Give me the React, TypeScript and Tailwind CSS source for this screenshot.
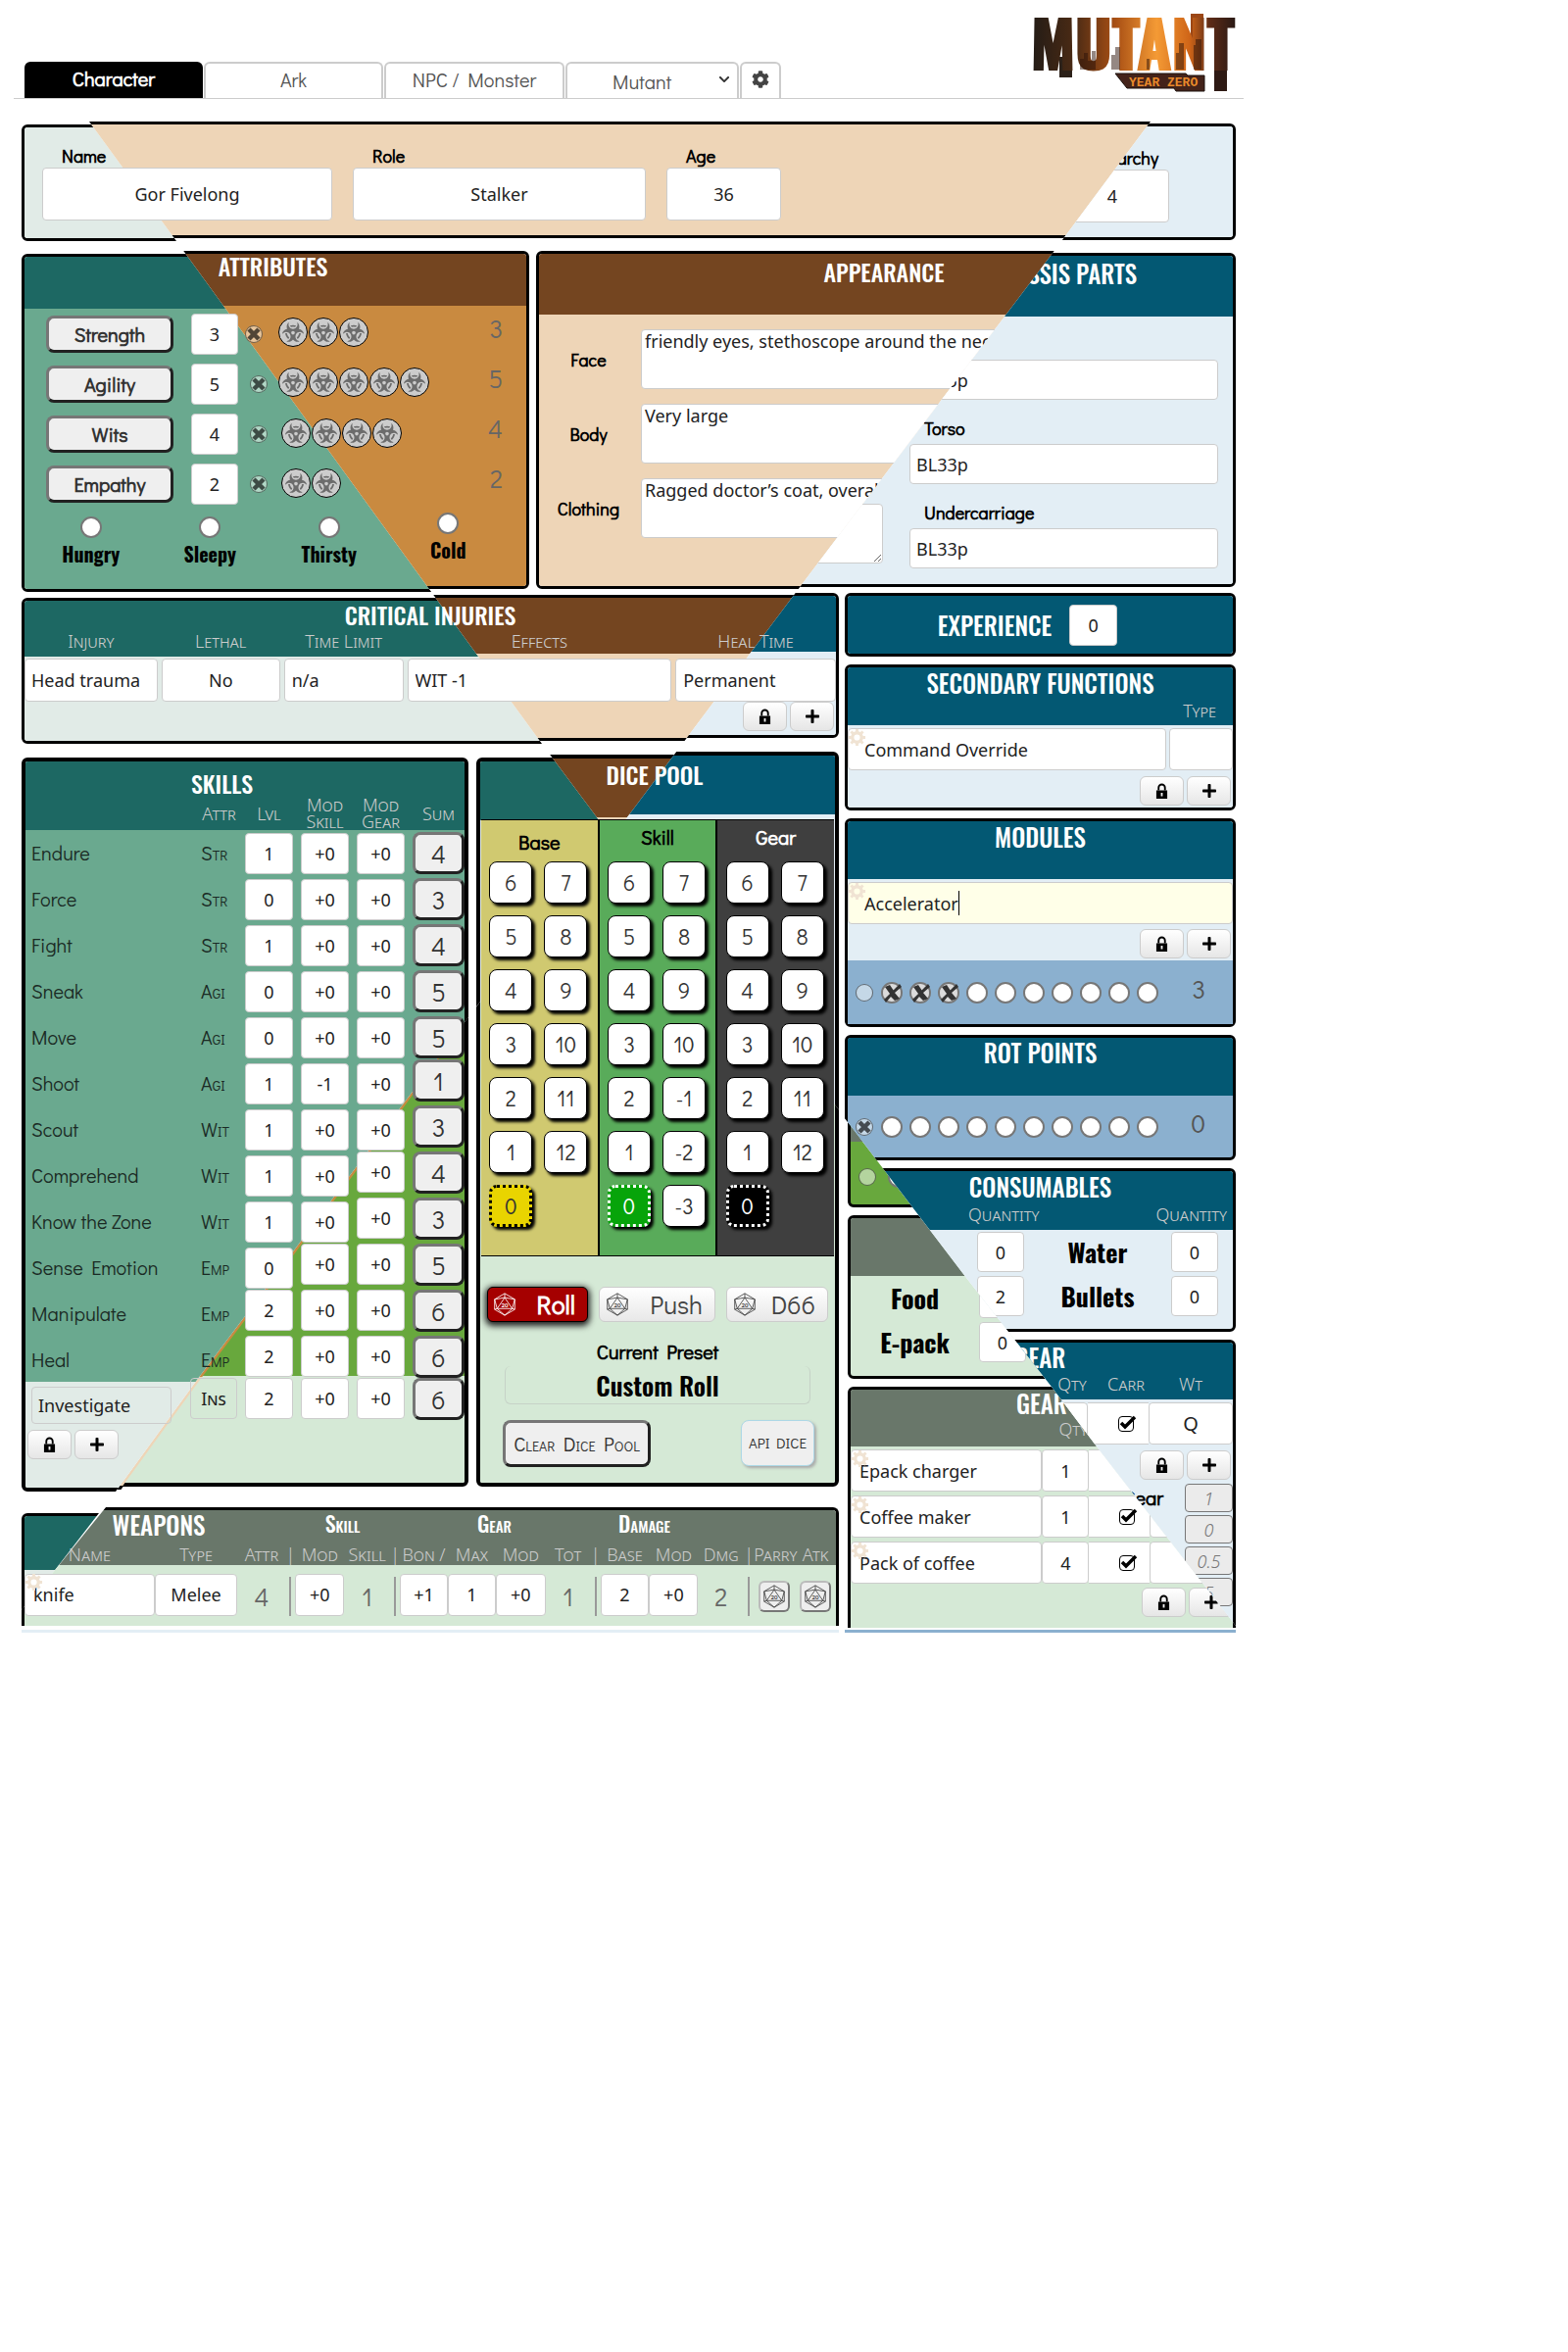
import React from "react";
import { FaBiohazard, FaCog, FaLock, FaPlus, FaTimes, FaChevronDown } from "react-icons/fa";

type Pt = [number, number];
type Region = "teal" | "brown" | "blue" | "green" | "seam";

/* Regions of the collage, in sheet coordinates. */
const tealEdge: Pt[] = [[2, 0], [91, 124], [188, 257], [443, 608], [553, 759], [612, 838], [609, 865]];
const lowerLeft: Pt[] = [[609, 865], [493, 1018], [408, 1131], [247, 1347], [201, 1408], [118, 1522], [53, 1606], [20, 1645]];
const lowerRight: Pt[] = [[667, 887], [733, 975], [865, 1144], [983, 1299], [1073, 1414], [1119, 1475], [1261, 1658], [1293, 1700]];
const shift = (pts: Pt[], dx: number): Pt[] => pts.map(([x, y]) => [x + dx, y]);
const greenEdge: Pt[] = [...lowerLeft.slice(0, 2), ...shift(lowerLeft.slice(2, 6), 3), ...lowerLeft.slice(6)];

const REGIONS: Record<Region, Pt[]> = {
  teal: [[0, 0], ...tealEdge, ...lowerLeft, [0, 1645]],
  brown: [[2, 0], [1265, 0], [1174, 124], [1075, 257], [823, 590], [637, 838], [625, 865], [609, 865], [612, 838], [553, 759], [443, 608], [188, 257], [91, 124]],
  blue: [[1265, 0], [1700, 0], [1700, 1700], [1293, 1700], ...[...lowerRight].reverse(), [625, 865], [637, 838], [823, 590], [1075, 257], [1174, 124]],
  green: [...lowerRight, [0, 1700], [0, 1645], ...[...greenEdge].reverse()],
  seam: [...lowerLeft.slice(1, 6), ...shift(lowerLeft.slice(1, 6), 4).reverse()],
};

const clip = (r: Region, x: number, y: number): React.CSSProperties => ({
  clipPath: `polygon(${REGIONS[r].map(([a, b]) => `${a - x}px ${b - y}px`).join(",")})`,
});

const HEAD = { teal: "bg-[#1d6863]", brown: "bg-[#744520]", blue: "bg-[#035873]", green: "bg-[#69776a]", seam: "bg-[#744520]" };
const PALE = { teal: "bg-[#e1ebe7]", brown: "bg-[#eed5b7]", blue: "bg-[#e3eef5]", green: "bg-[#d5e9d6]", seam: "bg-[#eed5b7]" };
const RICH = { teal: "bg-[#6aa98f]", brown: "bg-[#c98a40]", blue: "bg-[#8bb0cf]", green: "bg-[#68a83d]", seam: "bg-[#c98a40]" };

const OSWALD = "font-['Oswald','Liberation_Sans_Narrow','DejaVu_Sans_Condensed',sans-serif]";
const GEO = "font-['Didact_Gothic','Questrial',Lato,sans-serif]";
const CAPS = "font-['Noto_Sans',sans-serif] font-light text-[#ccc] text-lg leading-5 [font-variant:small-caps]";
const BOX = "rounded border border-[#ccc] bg-white text-[#222] font-['Noto_Sans',sans-serif] text-lg min-w-0";
const BEVEL = "rounded-lg border-[3px] border-t-[#767676] border-l-[#767676] border-r-[#212121] border-b-[#212121] bg-[#efefef] text-[#333]";

type SliceSpec = { r: Region; top?: number; bottom?: number; head?: number; foot?: number; rich?: boolean };

function Panel({ x, y, slices, thick, open, className = "", children }: {
  x: number; y: number; slices: SliceSpec[]; thick?: boolean; open?: boolean; className?: string; children?: React.ReactNode;
}) {
  return (
    <section className={`relative isolate min-w-0 ${className}`}>
      {slices.map((s, i) => (
        <div key={i} aria-hidden="true"
          className={`absolute inset-x-0 -z-10 flex flex-col overflow-hidden border-black ${open ? "rounded-t-md" : "rounded-md"} ${thick ? "border-4" : "border-[3px]"} ${open ? "border-b-0" : ""}`}
          style={{ top: s.top ?? 0, bottom: s.bottom ?? 0, ...clip(s.r, x, y + (s.top ?? 0)) }}>
          {s.head ? <div className={`shrink-0 ${HEAD[s.r]}`} style={{ height: s.head }} /> : null}
          <div className={`flex-1 ${s.rich ? RICH[s.r] : PALE[s.r]}`} />
          {s.foot ? <div className={`shrink-0 ${PALE[s.r]}`} style={{ height: s.foot }} /> : null}
        </div>
      ))}
      {children}
    </section>
  );
}

function Title({ children, wide, className = "" }: { children: React.ReactNode; wide?: boolean; className?: string }) {
  return <h2 className={`${OSWALD} text-center font-medium text-white ${wide ? "text-[25px]" : "text-2xl"} !leading-7 ${className}`}>{children}</h2>;
}

function Field({ label, value, className = "" }: { label: string; value?: string; className?: string }) {
  return <input aria-label={label} defaultValue={value} className={`${BOX} ${className}`} />;
}

function XBox({ label, on, tone }: { label: string; on?: boolean; tone: string }) {
  return (
    <span className="relative grid size-[18px] shrink-0 place-items-center">
      <input type="checkbox" aria-label={label} defaultChecked={on} className={`absolute inset-0 appearance-none rounded-full border border-black/50 ${tone}`} />
      {on && (
        <svg viewBox="0 0 18 18" className="relative size-[18px]"><path d="M4 4 L14 14 M14 4 L4 14" stroke="#000" strokeOpacity=".65" strokeWidth="4.5" /></svg>
      )}
    </span>
  );
}

function Bio() {
  return (
    <span className="grid size-[30px] place-items-center rounded-full border border-black bg-[#ccc] text-[#555]">
      <FaBiohazard className="size-[22px] opacity-80" />
    </span>
  );
}

function Circle({ label, marked }: { label: string; marked?: boolean }) {
  return (
    <span className="relative grid size-[22px] shrink-0 place-items-center">
      <input type="checkbox" aria-label={label} defaultChecked={marked} className="absolute inset-0 appearance-none rounded-full border-2 border-[#777] bg-white" />
      {marked && (
        <svg viewBox="0 0 22 22" className="relative size-[22px]">
          <circle cx="11" cy="11" r="9" fill="#999" opacity=".35" />
          <path d="M3 18 L19 2 L21 5 L14 11 L19 17 L14 19 L10 15 L5 21Z M4 5 L9 3 L13 9 L9 12Z" fill="#333" />
        </svg>
      )}
    </span>
  );
}

function D20({ className = "" }: { className?: string }) {
  return (
    <svg viewBox="0 0 28 28" className={className} fill="none" stroke="currentColor" strokeWidth="1" strokeLinejoin="round">
      <path d="M14 1 L26 8 V20 L14 27 L2 20 V8Z M14 1 V6 M2 8 L14 6 L26 8 M14 6 L5 19 H23Z M2 8 L5 19 L2 20 M26 8 L23 19 L26 20 M5 19 L14 27 L23 19" />
      <text x="14" y="17" textAnchor="middle" fontSize="7" fontFamily="Lato" fontWeight="700" fill="currentColor" stroke="none">20</text>
    </svg>
  );
}

function LockAdd({ className = "" }: { className?: string }) {
  const b = "grid h-[30px] w-[45px] place-items-center rounded-md border border-[#ccc] bg-gradient-to-b from-white to-[#e6e6e6] text-black";
  return (
    <div className={`flex gap-[3px] ${className}`}>
      <button aria-label="Lock" className={b}>
        <svg viewBox="0 0 14 18" className="h-[17px] w-[13px]">
          <path d="M3.5 8 V5 a3.5 3.5 0 0 1 7 0 V8" fill="none" stroke="#000" strokeWidth="2" />
          <path d="M1 8 H13 V17 H1Z M6 10.500 V14.500 H8 V10.500Z" fill="#000" fillRule="evenodd" />
        </svg>
      </button>
      <button aria-label="Add" className={b}><FaPlus className="size-4" /></button>
    </div>
  );
}

function ItemCog() {
  return (
    <svg viewBox="0 0 20 20" aria-hidden="true" className="absolute left-0 top-0 size-[19px]" stroke="#f0e3d3" fill="none">
      <circle cx="10" cy="10" r="5" strokeWidth="3.500" />
      <path d="M10 1 V4 M10 16 V19 M1 10 H4 M16 10 H19 M3.600 3.600 L5.800 5.800 M14.200 14.200 L16.400 16.400 M3.600 16.400 L5.800 14.200 M14.200 5.800 L16.400 3.600" strokeWidth="3" />
    </svg>
  );
}

function Track({ name, marks, on, value, className = "" }: { name: string; marks: number; on?: boolean; value: string; className?: string }) {
  return (
    <div className={`flex items-center pl-2 ${className}`}>
      <XBox label={`${name} toggle`} on={on} tone="bg-white/50" />
      <div className="ml-2 flex gap-[7px]">
        {Array.from({ length: 10 }, (_, i) => <Circle key={i} label={`${name} ${i + 1}`} marked={i < marks} />)}
      </div>
      <output className={`${GEO} mb-2 ml-auto pr-7 text-[26px] leading-7 text-[#555]`}>{value}</output>
    </div>
  );
}

function Logo() {
  return (
    <svg viewBox="0 0 218 84" className="h-[84px] w-[218px]" role="img" aria-label="Mutant Year Zero">
      <defs>
        <linearGradient id="fire" x1="0" x2="210" y1="0" y2="0" gradientUnits="userSpaceOnUse">
          <stop offset="0" stopColor="#211b16" />
          <stop offset=".22" stopColor="#4a2a14" />
          <stop offset=".42" stopColor="#a84f14" />
          <stop offset=".62" stopColor="#f49a35" />
          <stop offset=".78" stopColor="#cf6518" />
          <stop offset=".88" stopColor="#5c2b17" />
          <stop offset="1" stopColor="#2b1a15" />
        </linearGradient>
        <linearGradient id="dusk" x1="0" x2="0" y1="14" y2="64" gradientUnits="userSpaceOnUse">
          <stop offset=".4" stopColor="#2b1208" stopOpacity="0" />
          <stop offset="1" stopColor="#2b1208" stopOpacity=".75" />
        </linearGradient>
      </defs>
      <path d="M31 48 H44 V69 H31Z" fill="#2c2119" />
      <path d="M165 4 H178 V40 H165Z" fill="#9c4716" />
      <path d="M189 48 H202 V83 H189Z" fill="#2e1a14" />
      <path d="M88 65 H160 L162 67 H179 V83 H150 L148 80 H100Z" fill="#44231a" stroke="#1c130e" />
      <g fontSize="64" fontFamily="Oswald,'Liberation Sans Narrow',sans-serif" fontWeight="700" strokeWidth="2">
        <text x="2" y="61" fill="url(#fire)" stroke="url(#fire)">MUTANT</text>
      </g>
      <path d="M52 61 V50 H56 V44 H60 V52 H64 V42 H68 V61Z M84 61 V46 H88 V38 H93 V61Z M120 61 V50 H123 V61Z M150 61 V44 H153 V34 H158 V61Z M168 61 V36 H170 V30 H176 V61Z" fill="#2b1208" opacity=".5" />
      <path d="M4 40 H212 V61 H4Z" fill="url(#dusk)" opacity="0" />
      <text x="102" y="78" fontSize="13" fontFamily="'Liberation Mono',monospace" fontWeight="700" fill="#e98a2b">YEAR ZERO</text>
    </svg>
  );
}

function Header() {
  const tab = "h-[37px] rounded-t-md border-2 border-b-0 border-[#ccc] bg-white text-xl leading-6 text-[#555]";
  return (
    <header className="h-[124px] w-full max-w-[1269px] pl-[14px]">
      <div className="flex h-[101px] items-end justify-between border-b border-[#ccc]">
        <nav className={`${GEO} flex gap-px pl-[11px]`}>
          <button className="h-[37px] w-[182px] rounded-t-md bg-black pb-1 text-xl font-bold leading-6 text-white">Character</button>
          <button className={`${tab} w-[183px] pb-1`}>Ark</button>
          <button className={`${tab} w-[184px] pb-1`}>NPC / Monster</button>
          <span className="relative w-[177px]">
            <select aria-label="Sheet type" className={`${tab} w-full appearance-none pl-[46px]`}><option>Mutant</option></select>
            <FaChevronDown className="absolute right-[9px] top-[12px] size-3 text-[#333]" />
          </span>
          <button aria-label="Settings" className={`${tab} grid w-[42px] place-items-center pb-1`}><FaCog className="size-[18px] text-[#444]" /></button>
        </nav>
        <div className="self-start pr-px pt-[10px]"><Logo /></div>
      </div>
    </header>
  );
}

const IDENT = `${GEO} text-lg font-bold leading-6 text-black`;

function Identity() {
  return (
    <Panel x={22} y={124} className="h-[122px]" slices={[{ r: "teal", top: 3 }, { r: "brown", bottom: 3 }, { r: "blue", top: 2, bottom: 1 }]}>
      <div className="flex pl-[21px] pt-[23px]">
        <label className={`${IDENT} w-[296px]`}><span className="block pl-5">Name</span>
          <input defaultValue="Gor Fivelong" className={`${BOX} h-[54px] w-full text-center font-normal`} /></label>
        <label className={`${IDENT} ml-[21px] w-[299px]`}><span className="block pl-5">Role</span>
          <input defaultValue="Stalker" className={`${BOX} h-[54px] w-full text-center font-normal`} /></label>
        <label className={`${IDENT} ml-[21px] w-[117px]`}><span className="block pl-5">Age</span>
          <input defaultValue="36" className={`${BOX} h-[54px] w-full text-center font-normal`} /></label>
        <label className={`${IDENT} ml-auto mr-[68px] mt-0.5 w-[116px]`} style={clip("blue", 1077, 149)}><span className="block pr-[11px] text-right">Hierarchy</span>
          <input defaultValue="4" className={`${BOX} h-[54px] w-full text-center font-normal`} /></label>
      </div>
    </Panel>
  );
}

function Attributes() {
  const rows: [string, string][] = [["Strength", "3"], ["Agility", "5"], ["Wits", "4"], ["Empathy", "2"]];
  return (
    <Panel x={22} y={256} slices={[{ r: "teal", top: 3, head: 53, rich: true }, { r: "brown", bottom: 3, head: 53, rich: true }]}>
      <Title className="pr-[5px] pt-px">ATTRIBUTES</Title>
      <div className="mt-[35px] grid gap-[9px] pl-[25px] pr-[27px]">
        {rows.map(([n, v], i) => (
          <div key={n} className="flex h-[42px] items-center">
            <button className={`${BEVEL} ${GEO} h-[38px] w-[130px] text-xl font-bold leading-6`}>{n}</button>
            <Field label={n} value={v} className="ml-[18px] h-[42px] w-[48px] text-center" />
            <div className={`flex items-center ${i === 0 ? "ml-[7px]" : "ml-[12px]"}`}>
              <XBox label={`${n} trauma`} on tone={i === 0 ? "bg-[#e8c59b]" : "bg-[#b0d6c5]"} />
              <span className={`flex gap-px ${i === 0 ? "mb-[4px] ml-[16px]" : i === 1 ? "mb-[4px] ml-[11px]" : "mb-[2px] ml-[14px]"}`}>{Array.from({ length: Number(v) }, (_, k) => <Bio key={k} />)}</span>
            </div>
            <output className={`${GEO} mb-3 ml-auto text-[26px] leading-7 text-[#666]`}>{v}</output>
          </div>
        ))}
      </div>
      <div className="mt-[8px] grid grid-cols-4 pl-[12px] pr-[20px]">
        {["Hungry", "Sleepy", "Thirsty", "Cold"].map((n, i) => (
          <label key={n} className={`${OSWALD} flex flex-col items-center gap-[2px] text-xl font-bold leading-7 text-black ${i === 3 ? "pb-1 pr-1" : "pr-1 pt-1"}`}>
            <input type="checkbox" className="size-[22px] appearance-none rounded-full border-2 border-[#777] bg-white" />
            {n}
          </label>
        ))}
      </div>
    </Panel>
  );
}

function Appearance() {
  const notes: [string, string][] = [["Face", "friendly eyes, stethoscope around the neck"], ["Body", "Very large"], ["Clothing", "Ragged doctor’s coat, overalls"]];
  return (
    <Panel x={547} y={256} className="grid" slices={[{ r: "brown", bottom: 3, head: 62 }, { r: "blue", top: 2, bottom: 5, head: 62 }]}>
      <div className="[grid-area:1/1]" style={clip("brown", 547, 256)}>
        <Title className="pr-1 pt-[7px]">APPEARANCE</Title>
        <div className="mt-[45px] grid gap-[15px] pr-5">
          {notes.map(([n, t]) => (
            <label key={n} className={`${IDENT} flex items-center`}>
              <span className="w-[107px] text-center">{n}</span>
              <textarea defaultValue={t} className={`${BOX} block h-[61px] flex-1 resize-none overflow-hidden whitespace-nowrap px-[3px] font-normal leading-[22px]`} />
            </label>
          ))}
        </div>
      </div>
      <div className="[grid-area:1/1]" style={clip("blue", 547, 256)}>
        <Title wide className="pr-[101px] pt-[9px] !text-right">CHASSIS PARTS</Title>
        <div className="mt-[46px] flex justify-end gap-[27px] pr-[18px]">
          <textarea aria-label="Notes" className={`${BOX} mb-[5px] h-[61px] w-[200px] resize self-end`} />
          <div className="grid w-[315px] gap-[17px]">
            {["Head", "Torso", "Undercarriage"].map((n) => (
              <label key={n} className={IDENT}><span className="block pb-1 pl-[15px]">{n}</span>
                <input defaultValue="BL33p" className={`${BOX} h-[41px] w-full px-[6px] font-normal`} /></label>
            ))}
          </div>
        </div>
      </div>
    </Panel>
  );
}

function Injuries() {
  const cols = "grid grid-cols-[minmax(0,136fr)_minmax(0,121fr)_minmax(0,122fr)_minmax(0,270fr)_minmax(0,164fr)] gap-1 px-[3px]";
  return (
    <Panel x={22} y={605} className="h-[154px]" slices={[{ r: "teal", top: 5, head: 57 }, { r: "brown", top: 2, bottom: 3, head: 57 }, { r: "blue", bottom: 6, head: 57 }]}>
      <Title className="pt-[8px]">CRITICAL INJURIES</Title>
      <div className={`${cols} ${CAPS} pt-[3px] text-center`}>
        {["Injury", "Lethal", "Time Limit", "Effects", "Heal Time"].map((t) => <span key={t}>{t}</span>)}
      </div>
      <div className={`${cols} pt-[8px]`}>
        <Field label="Injury" value="Head trauma" className="h-11 px-[6px]" />
        <Field label="Lethal" value="No" className="h-11 text-center" />
        <Field label="Time limit" value="n/a" className="h-11 px-[7px]" />
        <Field label="Effects" value="WIT -1" className="h-11 px-[7px]" />
        <Field label="Heal time" value="Permanent" className="h-11 px-[7px]" />
      </div>
      <LockAdd className="justify-end pr-[5px]" />
    </Panel>
  );
}

const SKILLS: [string, string, string, string, string, string, number][] = [
  ["Endure", "Str", "1", "+0", "+0", "4", 9], ["Force", "Str", "0", "+0", "+0", "3", 9], ["Fight", "Str", "1", "+0", "+0", "4", 9],
  ["Sneak", "Agi", "0", "+0", "+0", "5", 9], ["Move", "Agi", "0", "+0", "+0", "5", 9], ["Shoot", "Agi", "1", "-1", "+0", "1", 3],
  ["Scout", "Wit", "1", "+0", "+0", "3", 3], ["Comprehend", "Wit", "1", "+0", "+0", "4", 2], ["Know the Zone", "Wit", "1", "+0", "+0", "3", 2],
  ["Sense Emotion", "Emp", "0", "+0", "+0", "5", 1], ["Manipulate", "Emp", "2", "+0", "+0", "6", 0], ["Heal", "Emp", "2", "+0", "+0", "6", 0],
];

function Skills() {
  const cols = "grid grid-cols-[minmax(0,171fr)_minmax(0,37fr)_minmax(0,49fr)_minmax(0,49fr)_minmax(0,49fr)_minmax(0,53fr)] gap-x-2";
  const seat = (raised: boolean) => (raised ? "self-start" : "self-end");
  return (
    <Panel thick x={22} y={767} slices={[
      { r: "seam", bottom: 2, head: 70, rich: true, foot: 111 },
      { r: "teal", top: 6, head: 70, rich: true, foot: 108 },
      { r: "green", bottom: 5, rich: true, foot: 109 },
    ]}>
      <div className="px-1 pt-[18px]">
        <Title className="pr-[47px]">SKILLS</Title>
        <div className={`${cols} ${CAPS} -mt-2 h-[42px] items-end text-center !leading-[17px]`}>
          <span /><span className="pb-2">Attr</span><span className="pb-2">Lvl</span><span>Mod Skill</span><span>Mod Gear</span><span className="pb-2">Sum</span>
        </div>
        <div className="mt-[-1px]">
          {SKILLS.map(([n, a, l, m, g, s, d]) => (
            <div key={n} className={`${cols} h-[47px] items-center pb-px`}>
              <span className={`${GEO} whitespace-nowrap pl-[6px] pt-[2px] text-xl text-[#1a2a24]`}>{n}</span>
              <span className={`${GEO} pt-[2px] text-xl text-[#1a2a24] [font-variant:small-caps]`}>{a}</span>
              <Field label={`${n} level`} value={l} className={`h-[42px] text-center ${seat(d < 1)}`} />
              <Field label={`${n} skill modifier`} value={m} className={`h-[42px] text-center ${seat(d < 2)}`} />
              <Field label={`${n} gear modifier`} value={g} className={`h-[42px] text-center ${seat(d < 3)}`} />
              <button aria-label={`${n} roll`} className={`${BEVEL} ${GEO} h-[43px] text-[26px] leading-7 ${seat(d < 4)}`}>{s}</button>
            </div>
          ))}
        </div>
        <div className="grid h-[45px] grid-cols-[minmax(0,149fr)_minmax(0,299fr)]">
          <Field label="Custom skill" value="Investigate" className="ml-[6px] mt-[5px] h-[38px] !bg-transparent px-[6px]" />
          <div className="-mt-1 grid grid-cols-[minmax(0,48fr)_minmax(0,49fr)_minmax(0,49fr)_minmax(0,49fr)_minmax(0,53fr)] gap-2 pl-[19px]">
            <Field label="Custom attribute" value="Ins" className={`${GEO} h-[42px] !bg-transparent text-center [font-variant:small-caps]`} />
            <Field label="Custom level" value="2" className="h-[42px] text-center" />
            <Field label="Custom skill modifier" value="+0" className="h-[42px] text-center" />
            <Field label="Custom gear modifier" value="+0" className="h-[42px] text-center" />
            <button aria-label="Custom roll" className={`${BEVEL} ${GEO} h-[43px] text-[26px] leading-7`}>6</button>
          </div>
        </div>
        <LockAdd className="pb-[33px] pl-[2px] pt-[4px]" />
      </div>
    </Panel>
  );
}

function DiceColumn({ name, left, right, bg, label, zero }: { name: string; left: string[]; right: string[]; bg: string; label: string; zero: string }) {
  const die = "h-[43px] w-11 rounded-lg border border-black bg-white text-[#333] shadow-[3px_3px_3px_#000]";
  return (
    <div className={`flex-1 ${bg}`}>
      <h3 className={`${GEO} text-center text-xl leading-6 ${label}`}>{name}</h3>
      <div className={`${GEO} flex justify-center gap-3 pr-[2px] text-[22px]`}>
        <div className="grid content-start gap-3">
          {left.map((v) => <button key={v} className={die}>{v}</button>)}
          <button className={`h-[43px] w-11 rounded-lg border-[3px] border-dotted shadow-[3px_3px_3px_#000] ${zero}`}>0</button>
        </div>
        <div className="grid content-start gap-3">{right.map((v) => <button key={v} className={die}>{v}</button>)}</div>
      </div>
    </div>
  );
}

function DicePool() {
  const left = ["6", "5", "4", "3", "2", "1"];
  const ghost = "flex h-[36px] items-center justify-between rounded-md border border-[#ccc] bg-gradient-to-b from-white to-[#e8e8e8] px-[6px] pr-3 text-[26px] leading-7 text-[#444]";
  return (
    <Panel thick x={486} y={767} slices={[
      { r: "green", bottom: 5 }, { r: "teal", top: 6, bottom: 5, head: 60 }, { r: "brown", top: 3, bottom: 5, head: 60 }, { r: "blue", bottom: 5, head: 60 },
    ]}>
      <Title className="pb-[32px] pr-[6px] pt-[9px]">DICE POOL</Title>
      <div className="mx-[5px] flex h-[446px] gap-[2px] border-y border-black bg-black">
        <DiceColumn name="Base" left={left} right={["7", "8", "9", "10", "11", "12"]} bg="bg-[#d0c970]" label="font-bold text-black pb-[8px] pt-[10px]" zero="border-black bg-[#e9d400] text-[#333]" />
        <DiceColumn name="Skill" left={left} right={["7", "8", "9", "10", "-1", "-2", "-3"]} bg="bg-[#59ab5a]" label="pb-[13px] pt-[5px] font-bold text-black" zero="border-white bg-[#07a40a] text-white" />
        <DiceColumn name="Gear" left={left} right={["7", "8", "9", "10", "11", "12"]} bg="bg-[#3f3f3f]" label="pb-[13px] pt-[5px] font-black text-white" zero="border-white bg-black text-white" />
      </div>
      <div className={`${GEO} mt-[31px] flex justify-between px-[11px]`}>
        <button className="flex h-[36px] w-[103px] items-center justify-between rounded-md border border-black bg-[#a50000] px-[5px] pr-3 text-[26px] font-bold leading-7 text-white shadow-[0_2px_6px_2px_#222]"><D20 className="size-6" />Roll</button>
        <button className={`${ghost} w-[119px]`}><D20 className="size-6" />Push</button>
        <button className={`${ghost} w-[104px]`}><D20 className="size-6" />D66</button>
      </div>
      <label className={`${GEO} mx-[29px] mt-[16px] block text-center text-xl font-bold leading-7 text-black`}>Current Preset
        <input defaultValue="Custom Roll" className={`${OSWALD} mt-px block h-[39px] w-full rounded-md border border-t-0 border-[#c6d2c7] bg-transparent text-center text-[26px] font-semibold`} />
      </label>
      <div className={`${GEO} mt-[16px] flex justify-between pl-[27px] pr-[25px]`}>
        <button className={`${BEVEL} h-[48px] w-[151px] whitespace-nowrap text-xl [font-variant:small-caps]`}>Clear Dice Pool</button>
        <button className="h-[47px] w-[75px] whitespace-nowrap rounded-lg border border-[#add8e6] bg-[#efefef] text-[15px] text-[#333] shadow-[2px_2px_3px_#aaa]">API DICE</button>
      </div>
    </Panel>
  );
}

function Weapons() {
  const cols = "grid grid-cols-[minmax(0,133fr)_minmax(0,85fr)_minmax(0,49fr)_minmax(0,10fr)_minmax(0,50fr)_minmax(0,47fr)_minmax(0,10fr)_minmax(0,49fr)_minmax(0,49fr)_minmax(0,51fr)_minmax(0,46fr)_minmax(0,10fr)_minmax(0,50fr)_minmax(0,50fr)_minmax(0,47fr)_minmax(0,10fr)_minmax(0,42fr)_minmax(0,42fr)] items-center px-[3px] text-center";
  const labels = ["Name", "Type", "Attr", "|", "Mod", "Skill", "|", "Bon /", "Max", "Mod", "Tot", "|", "Base", "Mod", "Dmg", "|", "Parry", "Atk"];
  const cells = ["knife", "Melee", "4", "|", "+0", "1", "|", "+1", "1", "+0", "1", "|", "2", "+0", "2", "|", "d", "d"];
  const plain = [2, 5, 10, 14];
  const group = `${OSWALD} text-center text-[22px] font-medium leading-6 text-white [font-variant:small-caps]`;
  return (
    <Panel open x={22} y={1538} className="h-[121px]" slices={[{ r: "teal", top: 6, head: 55 }, { r: "green", head: 56 }]}>
      <div className="grid grid-cols-[minmax(0,90fr)_minmax(0,100fr)_minmax(0,77fr)_minmax(0,125fr)_minmax(0,62fr)_minmax(0,65fr)_minmax(0,68fr)_minmax(0,247fr)] pt-1">
        <span /><Title wide className="!leading-6">WEAPONS</Title><span />
        <span className={`${group} pr-1`}>Skill</span><span /><span className={`${group} pr-2`}>Gear</span><span /><span className={`${group} pr-[150px]`}>Damage</span>
      </div>
      <div className={`${cols} ${CAPS} whitespace-nowrap pt-[6px]`}>
        {labels.map((t, i) => <span key={i}>{t}</span>)}
      </div>
      <div className={`${cols} relative mt-[9px] h-[43px]`}>
        {cells.map((v, i) => {
          if (v === "|") return <span key={i} className="mx-auto mt-1 h-10 w-0.5 bg-[#999]" />;
          if (v === "d") return (
            <button key={i} aria-label={labels[i]} className="mx-auto mt-1 grid size-8 place-items-center rounded-md border-2 border-[#bbb] border-b-[#777] border-r-[#777] bg-[#eee] text-[#444]"><D20 className="size-6" /></button>
          );
          if (plain.includes(i)) return <output key={i} className={`${GEO} pt-1 text-[26px] leading-7 text-[#666]`}>{v}</output>;
          return (
            <Field key={i} label={labels[i]} value={v} className={`h-[43px] w-full ${i === 0 ? "px-[8px]" : "text-center"}`} />
          );
        })}
        <span className="absolute left-[3px] top-0"><ItemCog /></span>
      </div>
    </Panel>
  );
}

function BluePanel({ y, head, className, children, rich }: { y: number; head: number; className?: string; children: React.ReactNode; rich?: number }) {
  return (
    <Panel x={862} y={y} slices={[{ r: "blue", head }]} className={className}>
      {children}
      {rich ? <div className="absolute inset-x-[3px] bottom-[3px] -z-10 bg-[#8bb0cf]" style={{ height: rich }} /> : null}
    </Panel>
  );
}

function RightTop() {
  return (
    <>
      <BluePanel y={605} head={70} className="flex h-[65px] items-center justify-center gap-[18px] pr-[26px]">
        <Title wide>EXPERIENCE</Title>
        <Field label="Experience" value="0" className="h-[42px] w-[49px] text-center" />
      </BluePanel>
      <BluePanel y={677} head={59} className="h-[149px]">
        <Title wide className="pt-[5px]">SECONDARY FUNCTIONS</Title>
        <p className={`${CAPS} pr-5 pt-[4px] text-right`}>Type</p>
        <div className="relative mt-[8px] grid grid-cols-[minmax(0,325fr)_minmax(0,65fr)] gap-[3px] px-[3px]">
          <Field label="Function" value="Command Override" className="h-[43px] px-4" />
          <Field label="Type" className="h-[43px]" />
          <span className="absolute left-[3px] top-0"><ItemCog /></span>
        </div>
        <LockAdd className="justify-end pr-[5px] pt-[6px]" />
      </BluePanel>
      <BluePanel y={834} head={59} rich={65} className="h-[213px]">
        <Title wide className="pt-[5px]">MODULES</Title>
        <div className="relative mt-[32px] px-[3px]">
          <Field label="Module" value="Accelerator" className="block h-[43px] w-full !bg-[#ffffe8] px-4" />
          <span aria-hidden="true" className="absolute left-[116px] top-[9px] h-[25px] w-px bg-black" />
          <span className="absolute left-[3px] top-0"><ItemCog /></span>
        </div>
        <LockAdd className="justify-end pr-[5px] pt-[5px]" />
        <Track name="Modules" marks={3} value="3" className="mx-[3px] mt-[2px] h-[65px]" />
      </BluePanel>
    </>
  );
}

const SHELL = "overflow-hidden rounded-md border-[3px] border-black";
const GEARCOLS = "grid grid-cols-[minmax(0,197fr)_minmax(0,48fr)_minmax(0,62fr)_minmax(0,86fr)]";
const CONSCOLS = "grid grid-cols-[minmax(0,132fr)_minmax(0,48fr)_minmax(0,150fr)_minmax(0,48fr)_minmax(0,15fr)] items-center gap-y-1 pt-[2px] text-center";

function GearRow({ name, qty, wt, carried }: { name?: string; qty?: string; wt?: string; carried?: boolean }) {
  return (
    <div className={`${GEARCOLS} relative`}>
      <Field label="Item" value={name} className="h-[43px] pl-2" />
      <Field label="Quantity" value={qty} className="h-[43px] text-center" />
      <span className="grid place-items-center border-y border-[#ccc] bg-white pl-4">
        {carried && (
          <span className="relative grid size-4 place-items-center">
            <input type="checkbox" aria-label="Carried" defaultChecked className="absolute inset-0 appearance-none rounded border border-black bg-white" />
            <svg viewBox="0 0 16 16" className="relative size-4 overflow-visible"><path d="M3 7 L7 11 L17 1" fill="none" stroke="#000" strokeWidth="3.500" /></svg>
          </span>
        )}
      </span>
      <Field label="Weight" value={wt} className={`${GEO} h-[43px] text-center !text-xl`} />
      {name && <ItemCog />}
    </div>
  );
}

function RightBottom() {
  const res = `${OSWALD} text-[26px] font-bold leading-[41px] text-black`;
  return (
    <div className="grid h-[605px] overflow-hidden">
      <div className="flex min-w-0 flex-col gap-2 pl-[3px] pt-[47px] [grid-area:1/1]" style={clip("green", 862, 1055)}>
        <section className={`${SHELL} h-[129px] shrink-0 bg-[#68a83d]`}>
          <div className="h-[59px] bg-[#69776a]" />
          <div className="flex items-center gap-3 pl-2 pt-[25px]"><XBox label="Rot toggle" tone="bg-white/50" /><Circle label="Rot" /></div>
        </section>
        <section className={`${SHELL} h-[167px] shrink-0 bg-[#d5e9d6]`}>
          <div className="h-[59px] bg-[#69776a]" />
          <div className={CONSCOLS}>
            <span className={res}>Food</span><Field label="Food" className="h-[41px]" /><span /><span /><span />
            <span className={res}>E-pack</span><Field label="E-pack" value="0" className="h-[41px] text-center" />
          </div>
        </section>
        <section className={`${SHELL} h-[300px] shrink-0 bg-[#d5e9d6]`}>
          <div className="h-[58px] bg-[#69776a]">
            <Title wide>GEAR</Title>
            <div className={`${GEARCOLS} ${CAPS} pt-[2px] text-center`}><span /><span className="pl-4">Qty</span></div>
          </div>
          <div className="grid gap-1 pt-[3px]">
            <GearRow name="Epack charger" qty="1" />
            <GearRow name="Coffee maker" qty="1" carried />
            <GearRow name="Pack of coffee" qty="4" carried />
          </div>
          <LockAdd className="justify-end pt-[4px]" />
        </section>
      </div>
      <div className="flex min-w-0 flex-col gap-2 [grid-area:1/1]" style={clip("blue", 862, 1055)}>
        <section className={`${SHELL} h-[128px] shrink-0 bg-[#8bb0cf]`}>
          <div className="h-[59px] bg-[#035873]"><Title wide className="pt-px">ROT POINTS</Title></div>
          <Track name="Rot" marks={0} on value="0" className="h-[64px]" />
        </section>
        <section className={`${SHELL} h-[167px] shrink-0 bg-[#e3eef5]`}>
          <div className="h-[60px] bg-[#035873]">
            <Title wide className="pt-[2px]">CONSUMABLES</Title>
            <div className={`${CAPS} flex justify-between pl-[123px] pr-[6px] pt-1`}><span>Quantity</span><span>Quantity</span></div>
          </div>
          <div className={CONSCOLS}>
            <span /><Field label="Grub" value="0" className="h-[41px] text-center" /><span className={res}>Water</span><Field label="Water" value="0" className="h-[41px] text-center" /><span />
            <span /><Field label="Food rations" value="2" className="h-[41px] text-center" /><span className={res}>Bullets</span><Field label="Bullets" value="0" className="h-[41px] text-center" />
          </div>
        </section>
        <section className={`${SHELL} h-[340px] shrink-0 bg-[#e3eef5]`}>
          <div className="h-[58px] bg-[#035873]">
            <Title wide className="pt-px">GEAR</Title>
            <div className={`${GEARCOLS} ${CAPS} pt-[3px] text-center`}><span /><span className="pl-4">Qty</span><span className="pl-4">Carr</span><span>Wt</span></div>
          </div>
          <div className="pt-[3px]"><GearRow wt="Q" carried /></div>
          <LockAdd className="justify-end pr-[2px] pt-[6px]" />
          <div className="flex justify-end gap-[22px] pt-1">
            <span className={`${GEO} text-xl font-bold`}>Gear</span>
            <div className="grid gap-[3px]">
              {["1", "0", "0.5", "5"].map((v) => (
                <input key={v} aria-label={`Load ${v}`} disabled defaultValue={v} className="h-[29px] w-[49px] rounded border border-[#777] bg-[#ebebeb] text-center font-['Noto_Sans',sans-serif] text-lg font-light italic text-[#777]" />
              ))}
            </div>
          </div>
        </section>
      </div>
    </div>
  );
}

export default function App() {
  return (
    <div className="min-h-screen w-full bg-white">
      <Header />
      <main className="w-full max-w-[1261px] pl-[22px]">
        <Identity />
        <div className="mt-[10px] grid min-h-[348px] grid-cols-[minmax(0,518fr)_minmax(0,714fr)] gap-[7px]">
          <Attributes />
          <Appearance />
        </div>
        <div className="mt-px grid grid-cols-[minmax(0,834fr)_minmax(0,399fr)] items-start gap-[6px]">
          <div className="min-w-0">
            <Injuries />
            <div className="mt-2 grid min-h-[755px] grid-cols-[minmax(0,456fr)_minmax(0,370fr)] gap-2">
              <Skills />
              <DicePool />
            </div>
            <div className="mt-4"><Weapons /></div>
          </div>
          <div className="flex min-w-0 flex-col gap-2">
            <RightTop />
            <RightBottom />
          </div>
        </div>
        <div className="mt-[2px] flex h-[3px] justify-between gap-[6px]">
          <div className="flex-[834] bg-[#e3eef5]" />
          <div className="flex-[399] bg-[#8bb0cf]" />
        </div>
      </main>
    </div>
  );
}
